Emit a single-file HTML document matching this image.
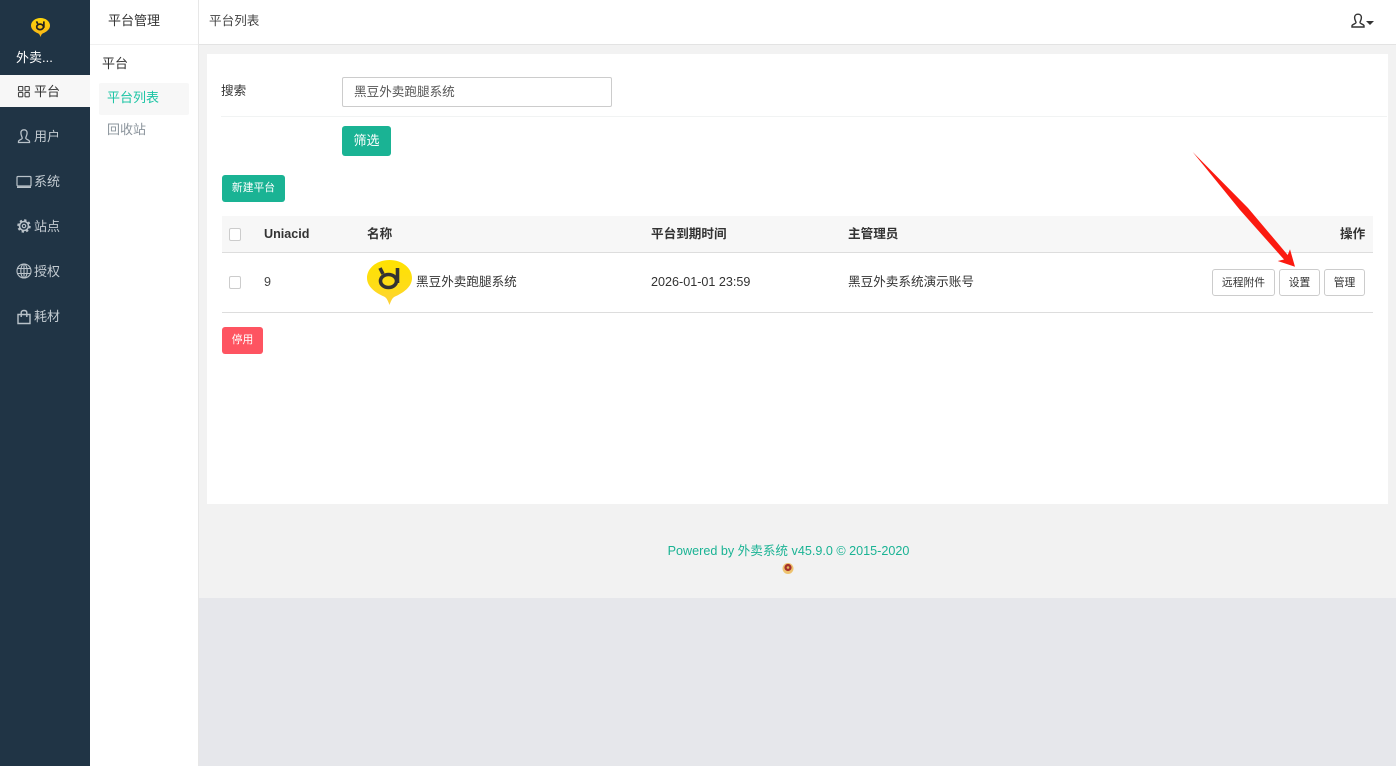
<!DOCTYPE html>
<html lang="zh"><head><meta charset="utf-8"><title>平台列表</title>
<style>
*{box-sizing:border-box}
html,body{margin:0;padding:0;width:1396px;height:766px;overflow:hidden;background:#e6e7eb;font-family:"Liberation Sans","Noto Sans CJK SC",sans-serif;font-size:12.6px;color:#333}
.a{position:absolute;white-space:nowrap;line-height:18px}
.btn{position:absolute;border-radius:3px;text-align:center;white-space:nowrap}
.g{background:#1ab394;color:#fff}
.w{background:#fff;border:1px solid #ccc;color:#333;font-size:10.8px;height:27px;line-height:27px;top:269px}
.nav{position:absolute;left:34px;color:#c4ccd2;line-height:18px;font-size:13px}
.ic{position:absolute;left:16px;width:16px;height:16px}
.cb{position:absolute;left:229px;width:12px;height:13px;border:1px solid #ccc;border-radius:2px;background:#fff}
.th{font-weight:bold}
.s13{font-size:13px}
</style></head><body>
<div style="position:absolute;left:0;top:0;width:90px;height:766px;background:#203445"></div>
<div style="position:absolute;left:90px;top:0;width:109px;height:766px;background:#fff;border-right:1px solid #e7e7e7"></div>
<div style="position:absolute;left:90px;top:44px;width:108px;height:1px;background:#f0f0f0"></div>
<div style="position:absolute;left:199px;top:0;width:1197px;height:45px;background:#fff;border-bottom:1px solid #e3e3e3"></div>
<div style="position:absolute;left:199px;top:45px;width:1197px;height:553px;background:#f2f2f2"></div>
<div style="position:absolute;left:207px;top:54px;width:1181px;height:450px;background:#fff"></div>

<svg style="position:absolute;left:31px;top:17px" width="19" height="21" viewBox="0 0 45 45"><defs><linearGradient id="s" x1="0" y1="0" x2="0" y2="1"><stop offset="0" stop-color="#fdd40a"/><stop offset="1" stop-color="#f9b418"/></linearGradient></defs><path d="M22.500 0C35 0 45 8 45 18C45 27 36 33 28 36.500C25 38 24 41 22.500 45C21 41 20 38 17 36.500C9 33 0 27 0 18C0 8 10 0 22.500 0Z" fill="url(#s)"/><ellipse cx="21.500" cy="21" rx="8" ry="6.500" fill="none" stroke="#222" stroke-width="4"/><path d="M13 8L16 14M30.500 8V23" stroke="#222" stroke-width="4" fill="none"/></svg>
<div class="a s13" style="left:16px;top:49px;color:#fff">外卖...</div>

<div style="position:absolute;left:0;top:75px;width:90px;height:32px;background:#f7f7f7"></div>
<svg class="ic" style="top:83px" viewBox="0 0 16 16" fill="none" stroke="#444" stroke-width="1.100"><rect x="2.500" y="3.500" width="4.300" height="4.300" rx=".5"/><rect x="9" y="3.500" width="4.300" height="4.300" rx=".5"/><rect x="2.500" y="9.500" width="4.300" height="4.300" rx=".5"/><rect x="9" y="9.500" width="4.300" height="4.300" rx=".5"/></svg>
<div class="nav" style="top:83px;color:#333">平台</div>

<svg class="ic" style="top:128px" viewBox="0 0 16 16" fill="none" stroke="#b9c2c9" stroke-width="1.300"><path d="M2.500 14.500H13.500V13.500C13.500 11.700 10 11.700 9.800 10.200C9.700 9 11.100 7.500 11.100 5C11.100 3 10 1.800 8 1.800S4.900 3 4.900 5C4.900 7.500 6.300 9 6.200 10.200C6 11.700 2.500 11.700 2.500 13.500Z"/></svg>
<div class="nav" style="top:128px">用户</div>

<svg class="ic" style="top:173px" viewBox="0 0 16 16" fill="none" stroke="#b9c2c9" stroke-width="1.200"><rect x="1" y="3.500" width="14" height="9.500" rx="1"/><path d="M1 14.300H15" stroke-width="1.400"/></svg>
<div class="nav" style="top:173px">系统</div>

<svg class="ic" style="top:218px" viewBox="0 0 16 16" fill="none" stroke="#b9c2c9"><circle cx="8" cy="8" r="4.500" stroke-width="1.600"/><circle cx="8" cy="8" r="5.800" stroke-width="1.900" stroke-dasharray="2.300 2.250"/><circle cx="8" cy="8" r="1.700" stroke-width="1.200"/></svg>
<div class="nav" style="top:218px">站点</div>

<svg class="ic" style="top:263px" viewBox="0 0 16 16" fill="none" stroke="#b9c2c9" stroke-width="1.100"><circle cx="8" cy="8" r="7"/><ellipse cx="8" cy="8" rx="3.200" ry="7"/><path d="M8 1V15M1.400 5.500H14.600M1.400 10.500H14.600"/></svg>
<div class="nav" style="top:263px">授权</div>

<svg class="ic" style="top:309px" viewBox="0 0 16 16" fill="none" stroke="#b9c2c9" stroke-width="1.400"><path d="M2 5.500H14V14.500H2Z"/><path d="M5.200 8V3.600C5.200 2.200 6.400 1.500 8 1.500S10.800 2.200 10.800 3.600V8"/></svg>
<div class="nav" style="top:308px">耗材</div>

<div class="a s13" style="left:108px;top:12px">平台管理</div>
<div class="a s13" style="left:102px;top:55px">平台</div>
<div style="position:absolute;left:99px;top:83px;width:90px;height:32px;background:#f7f7f7;border-radius:2px"></div>
<div class="a s13" style="left:107px;top:89px;color:#1bc4a4">平台列表</div>
<div class="a s13" style="left:107px;top:121px;color:#8b949c">回收站</div>

<div class="a" style="left:209px;top:12px;color:#444">平台列表</div>
<svg style="position:absolute;left:1351px;top:13px" width="14" height="15" viewBox="0 0 14 15" fill="none" stroke="#333" stroke-width="1.400"><path d="M1 14H13V12.800C13 11.200 9.400 11.200 9 9.500C8.900 8.600 10.400 7 10.400 4.600C10.400 2.600 9 1.200 7 1.200S3.600 2.600 3.600 4.600C3.600 7 5.100 8.600 5 9.500C4.600 11.200 1 11.200 1 12.800Z"/></svg>
<div style="position:absolute;left:1366px;top:21px;border:4px solid transparent;border-top-color:#333;border-bottom:0"></div>

<div class="a" style="left:221px;top:82px">搜索</div>
<div style="position:absolute;left:342px;top:77px;width:270px;height:30px;background:#fff;border:1px solid #ccc;border-radius:2px;padding-left:11px;line-height:28px;color:#555">黑豆外卖跑腿系统</div>
<div style="position:absolute;left:221px;top:116px;width:1166px;height:1px;background:#f1f3f3"></div>
<div class="btn g" style="left:342px;top:126px;width:49px;height:30px;line-height:29px;font-size:13px">筛选</div>
<div class="btn g" style="left:222px;top:175px;width:63px;height:27px;line-height:27px;font-size:10.8px">新建平台</div>

<div style="position:absolute;left:222px;top:216px;width:1151px;height:37px;background:#f7f7f7;border-bottom:1px solid #ddd"></div>
<div class="cb" style="top:228px"></div>
<div class="a th" style="left:264px;top:225px">Uniacid</div>
<div class="a th" style="left:367px;top:225px">名称</div>
<div class="a th" style="left:651px;top:225px">平台到期时间</div>
<div class="a th" style="left:848px;top:225px">主管理员</div>
<div class="a th" style="left:1340px;top:225px">操作</div>

<div class="cb" style="top:276px"></div>
<div class="a" style="left:264px;top:273px;color:#444">9</div>
<svg style="position:absolute;left:367px;top:260px" width="45" height="45" viewBox="0 0 45 45"><defs><linearGradient id="b" x1="0" y1="0" x2="0" y2="1"><stop offset="0" stop-color="#ffe200"/><stop offset=".6" stop-color="#fedc18"/><stop offset="1" stop-color="#fdd03e"/></linearGradient></defs><path d="M22.500 0C35 0 45 8 45 18C45 27 36 33 28 36.500C25 38 24 41 22.500 45C21 41 20 38 17 36.500C9 33 0 27 0 18C0 8 10 0 22.500 0Z" fill="url(#b)"/><ellipse cx="21.500" cy="21" rx="8" ry="6.500" fill="none" stroke="#333" stroke-width="3.600"/><path d="M13 8L16 14" stroke="#333" stroke-width="3.600"/><path d="M30.500 8V23" stroke="#333" stroke-width="3.600"/></svg>
<div class="a" style="left:416px;top:273px">黑豆外卖跑腿系统</div>
<div class="a" style="left:651px;top:273px">2026-01-01 23:59</div>
<div class="a" style="left:848px;top:273px">黑豆外卖系统演示账号</div>
<div class="btn w" style="left:1212px;width:63px">远程附件</div>
<div class="btn w" style="left:1279px;width:41px">设置</div>
<div class="btn w" style="left:1324px;width:41px">管理</div>
<div style="position:absolute;left:222px;top:312px;width:1151px;height:1px;background:#ddd"></div>
<div class="btn" style="left:222px;top:327px;width:41px;height:27px;line-height:27px;font-size:10.8px;background:#fe5461;color:#fff">停用</div>

<svg style="position:absolute;left:0;top:0" width="1396" height="766" viewBox="0 0 1396 766"><path d="M1192.700 152L1248 208L1287.700 255L1290 249.300L1295 266.700L1277.700 261L1284 259.500L1240 210Z" fill="#fb1a10"/></svg>

<div class="a" style="left:199px;width:1179px;top:542px;text-align:center;color:#1ab394">Powered by 外卖系统 v45.9.0 © 2015-2020</div>
<svg style="position:absolute;left:782px;top:562px" width="12" height="13" viewBox="0 0 12 13"><circle cx="6" cy="6.500" r="5.500" fill="#eec36f"/><circle cx="6" cy="5.500" r="3.600" fill="#a5302a"/><circle cx="6" cy="5.500" r="1.300" fill="#e5b85e"/></svg>
</body></html>
